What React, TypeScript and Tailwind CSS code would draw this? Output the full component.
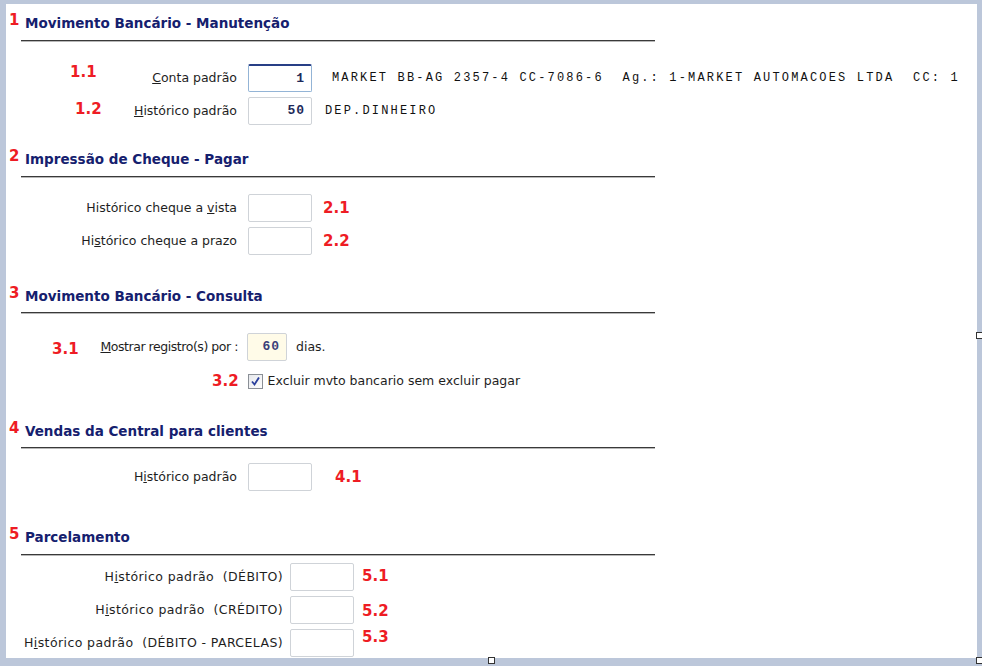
import React from "react";

const sans = "font-['DejaVu_Sans',sans-serif]";
const mono = "font-['Liberation_Mono',monospace]";

const Mark = ({ text, className = "" }: { text: string; className?: string }) => (
  <span className={`${sans} text-[15px] font-bold leading-none text-[#ee1c24] ${className}`}>
    {text}
  </span>
);

const SectionHeader = ({ num, title, className = "" }: { num: string; title: string; className?: string }) => (
  <div className={className}>
    <div className="flex h-[20px] items-start">
      <span className={`${sans} w-[19px] pl-[3px] text-[15px] font-bold leading-[14px] text-[#ee1c24]`}>{num}</span>
      <span className={`${sans} text-[13.5px] font-bold leading-[20px] text-[#15206e]`}>{title}</span>
    </div>
  </div>
);

const Rule = ({ className = "" }: { className?: string }) => (
  <div className={`ml-[15px] w-[634px] border-t border-[#3a3a3a] border-b border-b-[#b8b8b8] ${className}`} />
);

const Box = ({ value = "", className = "", focused = false }: { value?: string; className?: string; focused?: boolean }) => (
  <div
    className={`flex h-[28px] items-center justify-end rounded-[2px] border bg-white pr-[6px] ${mono} text-[13px] font-bold tracking-[1px] text-[#1d2a5a] ${
      focused ? "border-[#93b4d6] border-t-2 border-t-[#283f86]" : "border-[#cfd3d8]"
    } ${className}`}
  >
    {value}
  </div>
);

const Label = ({ children, className = "" }: { children: React.ReactNode; className?: string }) => (
  <span className={`${sans} ml-auto text-[12.5px] whitespace-nowrap text-[#1e1e1e] ${className}`}>{children}</span>
);

export default function App() {
  return (
    <div className="relative h-[666px] w-[982px] overflow-hidden bg-[#bcc7da] pt-[4px] pl-[6px]">
      <div className="h-[654px] w-[971px] overflow-hidden bg-white">
        {/* Movimento bancário - manutenção */}
        <SectionHeader num="1" title="Movimento Bancário - Manutenção" className="pt-[9px]" />
        <Rule className="mt-[7px]" />
        <div className="mt-[22px] flex h-[28px] items-center">
          <div className="flex w-[231px] items-center">
            <Mark text="1.1" className="mb-[12px] ml-[64px]" />
            <Label>
              <u>C</u>onta padrão
            </Label>
          </div>
          <Box value="1" focused className="ml-[11px] w-[64px]" />
          <span className={`${mono} ml-[20px] text-[12px] tracking-[2.17px] whitespace-pre text-[#111]`}>
            MARKET BB-AG 2357-4 CC-7086-6  Ag.: 1-MARKET AUTOMACOES LTDA  CC: 1
          </span>
        </div>
        <div className="mt-[5px] flex h-[28px] items-center">
          <div className="flex w-[231px] items-center">
            <Mark text="1.2" className="mb-[4px] ml-[69px]" />
            <Label>
              <u>H</u>istórico padrão
            </Label>
          </div>
          <Box value="50" className="ml-[11px] w-[64px]" />
          <span className={`${mono} ml-[13px] text-[12px] tracking-[2.17px] text-[#111]`}>DEP.DINHEIRO</span>
        </div>

        {/* Impressão de cheque */}
        <SectionHeader num="2" title="Impressão de Cheque - Pagar" className="mt-[24px]" />
        <Rule className="mt-[7px]" />
        <div className="mt-[16px] flex h-[28px] items-center">
          <div className="flex w-[231px] items-center">
            <Label>
              Histórico cheque a <u>v</u>ista
            </Label>
          </div>
          <Box className="ml-[11px] w-[64px]" />
          <Mark text="2.1" className="ml-[11px]" />
        </div>
        <div className="mt-[5px] flex h-[28px] items-center">
          <div className="flex w-[231px] items-center">
            <Label>
              Hi<u>s</u>tórico cheque a prazo
            </Label>
          </div>
          <Box className="ml-[11px] w-[64px]" />
          <Mark text="2.2" className="ml-[11px]" />
        </div>

        {/* Movimento bancário - consulta */}
        <SectionHeader num="3" title="Movimento Bancário - Consulta" className="mt-[31px]" />
        <Rule className="mt-[6px]" />
        <div className="mt-[19px] flex h-[28px] items-center">
          <div className="flex w-[232px] items-center">
            <Mark text="3.1" className="mt-[4px] ml-[46px]" />
            <Label className="tracking-[-0.45px]">
              <u>M</u>ostrar registro(s) por :
            </Label>
          </div>
          <Box value="60" className="ml-[9px] w-[40px] !bg-[#fffbe8] !text-[#3b3f7a]" />
          <span className={`${sans} ml-[9px] text-[12.5px] text-[#1e1e1e]`}>dias.</span>
        </div>
        <div className="mt-[12px] flex h-[16px] items-center">
          <Mark text="3.2" className="ml-[206px]" />
          <div className="ml-[9px] flex h-[15px] w-[15px] items-center justify-center border border-[#8a8f96] bg-gradient-to-br from-[#e6e8ec] to-[#fdfdfd]">
            <svg width="11" height="11" viewBox="0 0 11 11">
              <path d="M2 5.5 L4.5 8.5 L9 1.5" fill="none" stroke="#2a3f9c" strokeWidth="1.8" />
            </svg>
          </div>
          <span className={`${sans} ml-[5px] text-[12.5px] text-[#1e1e1e]`}>Excluir mvto bancario sem excluir pagar</span>
        </div>

        {/* Vendas da central */}
        <SectionHeader num="4" title="Vendas da Central para clientes" className="mt-[32px]" />
        <Rule className="mt-[6px]" />
        <div className="mt-[14px] flex h-[28px] items-center">
          <div className="flex w-[231px] items-center">
            <Label>
              H<u>i</u>stórico padrão
            </Label>
          </div>
          <Box className="ml-[11px] w-[64px]" />
          <Mark text="4.1" className="ml-[23px]" />
        </div>

        {/* Parcelamento */}
        <SectionHeader num="5" title="Parcelamento" className="mt-[36px]" />
        <Rule className="mt-[7px]" />
        {[
          { label: "(DÉBITO)", mark: "5.1", shift: "mb-[2px]" },
          { label: "(CRÉDITO)", mark: "5.2", shift: "mt-[2px]" },
          { label: "(DÉBITO - PARCELAS)", mark: "5.3", shift: "mb-[12px]" },
        ].map((row, i) => (
          <div key={row.mark} className={`${i === 0 ? "mt-[7px]" : "mt-[5px]"} flex h-[28px] items-center`}>
            <div className="flex w-[277px] items-center">
              <Label className="tracking-[0.4px]">
                H<u>i</u>stórico padrão&nbsp;&nbsp;{row.label}
              </Label>
            </div>
            <Box className="ml-[7px] w-[64px]" />
            <Mark text={row.mark} className={`ml-[8px] ${row.shift}`} />
          </div>
        ))}
      </div>

      {/* form resize handles */}
      <div className="absolute top-[332px] left-[976px] h-[7px] w-[7px] border border-[#333] bg-white" />
      <div className="absolute top-[657px] left-[488px] h-[7px] w-[7px] border border-[#333] bg-white" />
      <div className="absolute top-[657px] left-[976px] h-[7px] w-[7px] border border-[#333] bg-white" />
    </div>
  );
}
